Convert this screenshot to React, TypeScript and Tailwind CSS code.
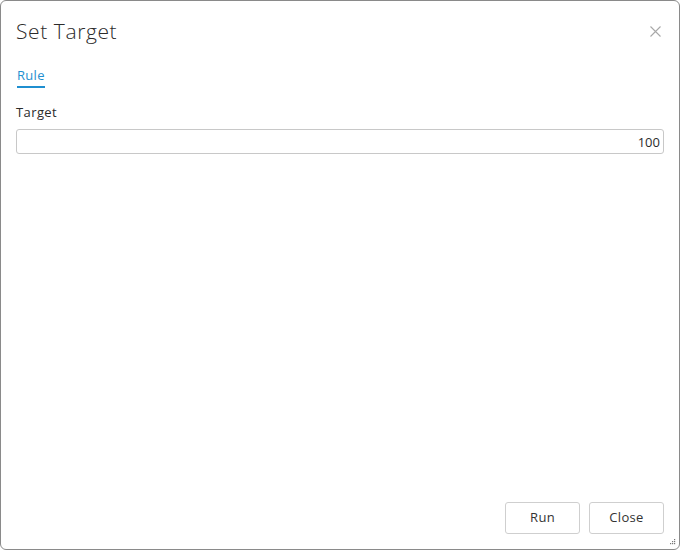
import React from 'react';

export default function App() {
  return (
    <div
      className="w-[680px] h-[550px] bg-white"
      style={{ fontFamily: '"Open Sans", "Noto Sans", sans-serif' }}
    >
      <div className="relative flex flex-col w-full h-full border border-[#8a8a8a] rounded-[6px] bg-white">
        <div className="flex items-center justify-between pl-[15px] pr-[18px] pt-[14px] h-[46px]">
          <h1 className="text-[21px] leading-[28px] font-light text-[#2b2b2b] tracking-[0.6px]">Set Target</h1>
          <button className="text-[#a8a8a8]" aria-label="Close">
            <svg width="11" height="11" viewBox="0 0 11 11" fill="none" stroke="currentColor" strokeWidth="1.1">
              <path d="M0.5 0.5L10.5 10.5M10.5 0.5L0.5 10.5" />
            </svg>
          </button>
        </div>

        <div className="px-[15px] pt-[15px]">
          <div className="inline-flex flex-col">
            <span className="text-[13px] leading-[18px] text-[#1f8fd0] px-[1px] tracking-[0.3px]">Rule</span>
            <span className="mt-[2px] h-[2px] bg-[#1f8fd0] mx-[1px]" />
          </div>
        </div>

        <div className="flex-1 px-[15px] pt-[15px]">
          <label className="block text-[13px] leading-[18px] text-[#2b2b2b] tracking-[0.4px]">Target</label>
          <input
            type="text"
            defaultValue="100"
            className="mt-[8px] block w-full h-[25px] border border-[#c8c8c8] rounded-[3px] px-[3px] text-right text-[13px] text-[#2b2b2b] outline-none"
          />
        </div>

        <div className="flex justify-end gap-[9px] px-[15px] pb-[15px]">
          <button className="w-[75px] h-[32px] border border-[#cfcfcf] rounded-[3px] text-[13px] text-[#333] bg-white tracking-[0.3px]">
            Run
          </button>
          <button className="w-[75px] h-[32px] border border-[#cfcfcf] rounded-[3px] text-[13px] text-[#333] bg-white tracking-[0.3px]">
            Close
          </button>
        </div>

        <svg className="absolute right-[3px] bottom-[3px]" width="7" height="7" viewBox="0 0 7 7" fill="#777">
          <rect x="5" y="0" width="1.2" height="1.2" />
          <rect x="3" y="2" width="1.2" height="1.2" />
          <rect x="5" y="2" width="1.2" height="1.2" />
          <rect x="1" y="4" width="1.2" height="1.2" />
          <rect x="3" y="4" width="1.2" height="1.2" />
          <rect x="5" y="4" width="1.2" height="1.2" />
        </svg>
      </div>
    </div>
  );
}
